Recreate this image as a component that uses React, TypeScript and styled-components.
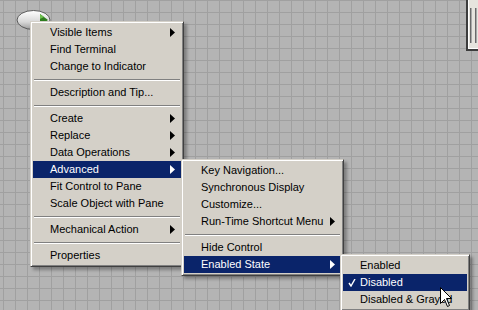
import styled, { createGlobalStyle } from 'styled-components'

const GlobalStyle = createGlobalStyle`
    html, body {
        margin: 0;
        padding: 0;
        background: #b4b4b4;
    }
`

const Panel = styled.div`
    position: relative;
    width: 478px;
    height: 310px;
    overflow: hidden;
    background-color: #b4b4b4;
    background-image:
        linear-gradient(#a0a0a0 1px, transparent 1px),
        linear-gradient(90deg, #a0a0a0 1px, transparent 1px);
    background-size: 12px 12px;
    background-position: 3px 0;
    font-family: "Liberation Sans", Arial, sans-serif;
    font-size: 11px;
`

const Led = styled.svg`
    position: absolute;
    left: 16px;
    top: 9px;
`

const FrameEdge = styled.div`
    position: absolute;
    left: 466px;
    top: -4px;
    width: 14px;
    height: 35px;
    background: #e6e4de;
    border-left: 2px solid #3c3c3c;
    border-bottom: 2px solid #3c3c3c;
    box-shadow: inset 1px -1px #ffffff;
    display: flex;
    gap: 3px;
    padding: 12px 0 6px 2px;
    box-sizing: content-box;
`

const Grip = styled.div`
    width: 1px;
    height: 100%;
    background: #6a6a6a;
    border-right: 1px solid #a8a8a8;
`

const Menu = styled.div<{ $left: number; $top: number; $width: number }>`
    position: absolute;
    left: ${p => p.$left}px;
    top: ${p => p.$top}px;
    width: ${p => p.$width}px;
    box-sizing: border-box;
    padding: 2px;
    background: #d4d0c8;
    border: 1px solid;
    border-color: #d4d0c8 #404040 #404040 #d4d0c8;
    box-shadow:
        inset 1px 1px #ffffff,
        inset -1px -1px #808080,
        3px 3px 3px rgba(0, 0, 0, 0.3);
`

const Item = styled.div<{ $active?: boolean }>`
    position: relative;
    display: flex;
    align-items: center;
    height: 17px;
    line-height: 17px;
    padding-left: 17px;
    white-space: nowrap;
    color: ${p => (p.$active ? '#ffffff' : '#000000')};
    background: ${p => (p.$active ? '#0a246a' : 'transparent')};
`

const Arrow = styled.span`
    margin-left: auto;
    margin-right: 6px;
    width: 5px;
    height: 9px;
    background: currentColor;
    clip-path: polygon(0 0, 100% 50%, 0 100%);
`

const Separator = styled.div`
    height: 9px;
    display: flex;
    flex-direction: column;
    justify-content: center;
    padding: 0 1px;

    &::before {
        content: '';
        height: 1px;
        background: #808080;
    }
    &::after {
        content: '';
        height: 1px;
        background: #ffffff;
    }
`

const Check = styled.svg`
    position: absolute;
    left: 5px;
    top: 5px;
`

const Cursor = styled.svg`
    position: absolute;
    left: 440px;
    top: 287px;
`

type Entry = { label?: string; sub?: boolean; active?: boolean; checked?: boolean; sep?: boolean }

const mainItems: Entry[] = [
    { label: 'Visible Items', sub: true },
    { label: 'Find Terminal' },
    { label: 'Change to Indicator' },
    { sep: true },
    { label: 'Description and Tip...' },
    { sep: true },
    { label: 'Create', sub: true },
    { label: 'Replace', sub: true },
    { label: 'Data Operations', sub: true },
    { label: 'Advanced', sub: true, active: true },
    { label: 'Fit Control to Pane' },
    { label: 'Scale Object with Pane' },
    { sep: true },
    { label: 'Mechanical Action', sub: true },
    { sep: true },
    { label: 'Properties' },
]

const advancedItems: Entry[] = [
    { label: 'Key Navigation...' },
    { label: 'Synchronous Display' },
    { label: 'Customize...' },
    { label: 'Run-Time Shortcut Menu', sub: true },
    { sep: true },
    { label: 'Hide Control' },
    { label: 'Enabled State', sub: true, active: true },
]

const stateItems: Entry[] = [
    { label: 'Enabled' },
    { label: 'Disabled', active: true, checked: true },
    { label: 'Disabled & Grayed' },
]

function MenuList({ items, left, top, width }: { items: Entry[]; left: number; top: number; width: number }) {
    return <Menu $left={left} $top={top} $width={width}>
        {items.map((it, i) => it.sep
            ? <Separator key={i} />
            : <Item key={i} $active={it.active}>
                {it.checked && <Check width="8" height="8" viewBox="0 0 8 8">
                    <path d="M1 4 L3 7 L7 0" fill="none" stroke="currentColor" strokeWidth="1.4" />
                </Check>}
                {it.label}
                {it.sub && <Arrow />}
            </Item>
        )}
    </Menu>
}

export default function App() {
    return <>
        <GlobalStyle />
        <Panel>
            <Led width="36" height="24" viewBox="0 0 36 24">
                <defs>
                    <linearGradient id="ledBody" x1="0" y1="0" x2="0" y2="1">
                        <stop offset="0" stopColor="#ffffff" />
                        <stop offset="0.6" stopColor="#d8d8d8" />
                        <stop offset="1" stopColor="#9a9a9a" />
                    </linearGradient>
                </defs>
                <ellipse cx="17.5" cy="11" rx="16.5" ry="9.5" fill="url(#ledBody)" stroke="#5a5a5a" />
                <path d="M24 5 L32 11 L24 17 Z" fill="#2e7d1e" />
                <path d="M24 5 L28 8 L24 10 Z" fill="#6fc04f" />
            </Led>
            <FrameEdge>
                <Grip />
                <Grip />
            </FrameEdge>
            <MenuList items={mainItems} left={30} top={21} width={154} />
            <MenuList items={advancedItems} left={181} top={159} width={163} />
            <MenuList items={stateItems} left={340} top={254} width={130} />
            <Cursor width="13" height="21" viewBox="0 0 13 21">
                <path d="M0.5 0.5 L0.5 16.5 L4.5 12.5 L7.5 19.5 L9.5 18.5 L6.5 11.5 L11.5 11.5 Z" fill="#ffffff" stroke="#000000" strokeWidth="1" />
            </Cursor>
        </Panel>
    </>
}
